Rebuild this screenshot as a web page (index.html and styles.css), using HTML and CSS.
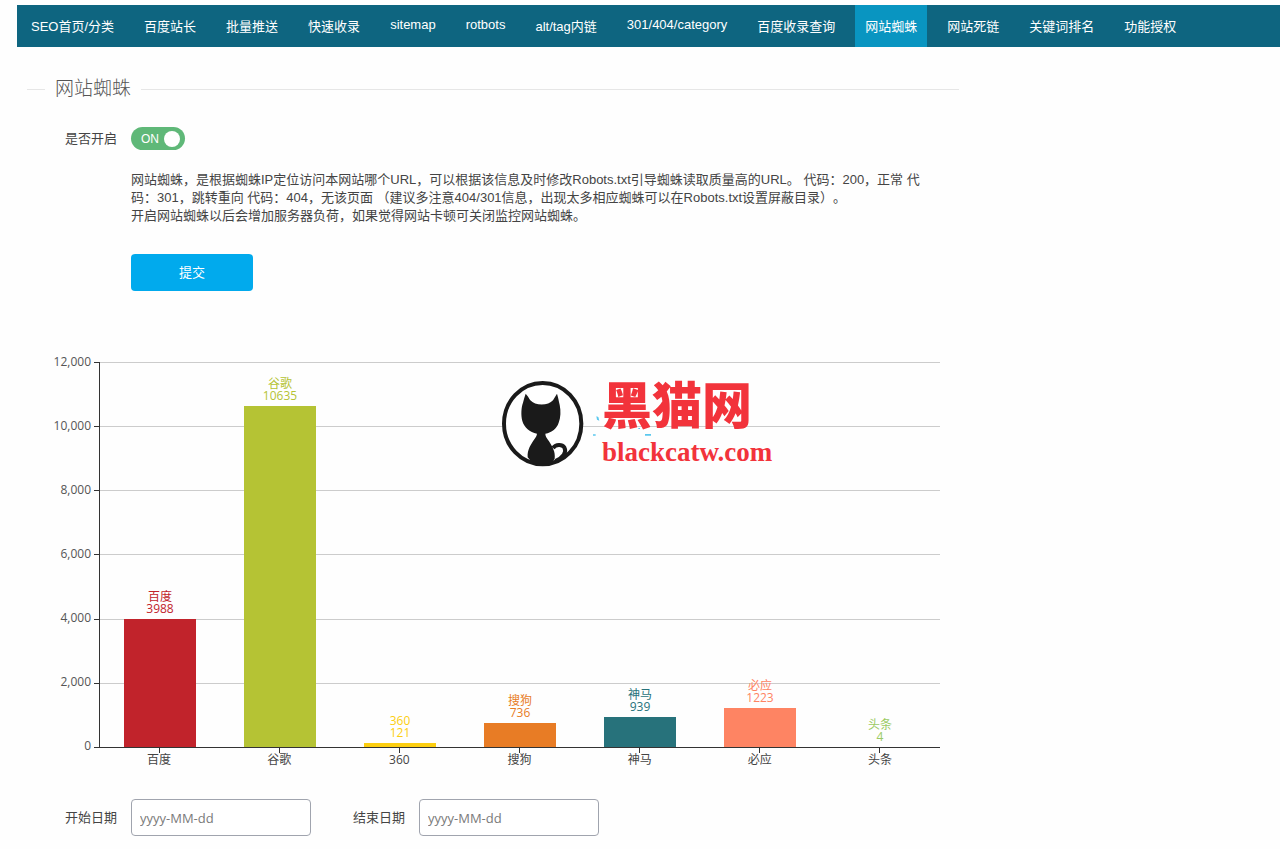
FILE: index.html
```html
<!DOCTYPE html>
<html lang="zh-CN">
<head>
<meta charset="utf-8">
<meta name="viewport" content="width=device-width, initial-scale=1">
<title>网站蜘蛛</title>
<link rel="stylesheet" href="styles.css">
</head>
<body>
<nav class="topnav">
  <a href="#">SEO首页/分类</a>
  <a href="#">百度站长</a>
  <a href="#">批量推送</a>
  <a href="#">快速收录</a>
  <a href="#" class="latin">sitemap</a>
  <a href="#" class="latin">rotbots</a>
  <a href="#">alt/tag内链</a>
  <a href="#" class="latin">301/404/category</a>
  <a href="#">百度收录查询</a>
  <a href="#" class="active" aria-current="page">网站蜘蛛</a>
  <a href="#">网站死链</a>
  <a href="#">关键词排名</a>
  <a href="#">功能授权</a>
</nav>

<main class="page">
  <h1 class="section-title">网站蜘蛛</h1>

  <form class="settings">
    <div class="row">
      <label class="row-label" for="enable">是否开启</label>
      <div class="switch">
        <input type="checkbox" id="enable" checked>
        <span class="switch-text">ON</span>
      </div>
    </div>
    <div class="row-body">
      <p class="help">网站蜘蛛，是根据蜘蛛IP定位访问本网站哪个URL，可以根据该信息及时修改Robots.txt引导蜘蛛读取质量高的URL。 代码：200，正常 代码：301，跳转重向 代码：404，无该页面 （建议多注意404/301信息，出现太多相应蜘蛛可以在Robots.txt设置屏蔽目录）。<br>开启网站蜘蛛以后会增加服务器负荷，如果觉得网站卡顿可关闭监控网站蜘蛛。</p>
      <button type="button" class="submit">提交</button>
    </div>
  </form>

  <section class="chart">
    <ul class="y-axis">
      <li><span>12,000</span></li>
      <li><span>10,000</span></li>
      <li><span>8,000</span></li>
      <li><span>6,000</span></li>
      <li><span>4,000</span></li>
      <li><span>2,000</span></li>
      <li><span>0</span></li>
    </ul>
    <div class="plot">
      <div class="grid-lines"><i></i><i></i><i></i><i></i><i></i><i></i><i></i></div>
      <div class="bars">
        <div class="col baidu"><span class="value">百度<br>3988</span><div class="bar" style="height:33.23%"></div></div>
        <div class="col google"><span class="value">谷歌<br>10635</span><div class="bar" style="height:88.63%"></div></div>
        <div class="col so360"><span class="value">360<br>121</span><div class="bar" style="height:1.01%"></div></div>
        <div class="col sogou"><span class="value">搜狗<br>736</span><div class="bar" style="height:6.13%"></div></div>
        <div class="col shenma"><span class="value">神马<br>939</span><div class="bar" style="height:7.83%"></div></div>
        <div class="col bing"><span class="value">必应<br>1223</span><div class="bar" style="height:10.19%"></div></div>
        <div class="col toutiao"><span class="value">头条<br>4</span><div class="bar" style="height:0%"></div></div>
      </div>
    </div>
    <ul class="x-axis">
      <li>百度</li><li>谷歌</li><li>360</li><li>搜狗</li><li>神马</li><li>必应</li><li>头条</li>
    </ul>
    <svg class="brand" width="300" height="130" viewBox="0 -20 300 130" role="img" aria-label="黑猫网 blackcatw.com">
      <g transform="scale(.33333)">
        <ellipse cx="158" cy="161" rx="116" ry="122" fill="#fff" stroke="#1a1a1a" stroke-width="12"/>
        <path fill="#1a1a1a" d="M107 71C112 76 117 84 121 91C135 108 175 108 189 91C193 84 197 77 201 71C205 83 206 93 209 104C213 122 212 143 206 158C200 176 186 187 166 191C166 199 171 205 177 214C187 230 197 246 194 266L184 281H130L113 262C111 239 124 222 133 208C138 201 140 197 141 191C119 187 103 173 97 153C92 135 94 111 99 98C101 89 104 80 107 71Z"/>
        <path fill="none" stroke="#1a1a1a" stroke-width="12" d="M189 234C198 222 216 222 223 232C231 247 219 264 196 273"/>
        <path fill="#5bc8ee" d="M319 139l6 2 3 11-7-3zM309 193h8v4h-8zM465 192h18v5h-18zM384 38l4 3-2 6zM445 174h5v3h-5z"/>
      </g>
      <text class="brand-name" x="112" y="54">黑猫网</text>
      <text class="brand-domain" x="112" y="91">blackcatw.com</text>
    </svg>
  </section>

  <form class="dates">
    <div class="row">
      <label class="row-label" for="start">开始日期</label>
      <input class="date" id="start" type="text" placeholder="yyyy-MM-dd">
    </div>
    <div class="row">
      <label class="row-label" for="end">结束日期</label>
      <input class="date" id="end" type="text" placeholder="yyyy-MM-dd">
    </div>
  </form>
</main>
</body>
</html>
```

FILE: styles.css
```css
* {
  box-sizing: border-box;
}

body {
  margin: 0;
  padding: 5px 0 12px 17px;
  background: #fefefe;
  color: #444;
  font: 13px/18px "Liberation Sans", "Noto Sans CJK SC", sans-serif;
  text-spacing-trim: space-all;
}

ul {
  margin: 0;
  padding: 0;
  list-style: none;
}

.topnav {
  display: flex;
  gap: 10px;
  min-height: 42px;
  padding: 0 4px;
  background: #0e6580;
  line-height: normal;
  white-space: nowrap;
}

.topnav a {
  display: flex;
  align-items: center;
  padding: 0 10px 1px;
  color: #fff;
  text-decoration: none;
}

.topnav .latin {
  padding-bottom: 4px;
}

.topnav .active {
  background: #0995c1;
}

.page {
  max-width: 942px;
  padding-left: 10px;
}

.section-title {
  display: flex;
  align-items: center;
  gap: 10px;
  margin: 29px 0 25px;
  color: #555;
  font-size: 19px;
  font-weight: 300;
  line-height: 26px;
}

.section-title::before,
.section-title::after {
  content: "";
  width: 18px;
  height: 1px;
  background: #e6e6e6;
}

.section-title::after {
  flex: 1;
}

.row {
  display: flex;
  align-items: center;
}

.row-label {
  width: 90px;
  margin-right: 14px;
  text-align: right;
}

.switch {
  display: grid;
  align-items: center;
}

.switch input,
.switch-text {
  grid-area: 1 / 1;
}

.switch input {
  display: flex;
  align-items: center;
  justify-content: flex-end;
  appearance: none;
  width: 54px;
  height: 23px;
  margin: 0;
  padding: 0 5px;
  border-radius: 12px;
  background: #5fb878;
}

.switch input::after {
  content: "";
  width: 16px;
  height: 16px;
  border-radius: 50%;
  background: #fff;
}

.switch-text {
  padding-left: 10px;
  color: #fff;
  font-size: 12px;
  pointer-events: none;
}

.row-body {
  padding: 21px 20px 0 104px;
}

.help {
  margin: 0 0 29px;
}

.submit {
  width: 122px;
  height: 37px;
  border: 0;
  border-radius: 4px;
  background: #01aaed;
  color: #fff;
  font: inherit;
}

.chart {
  position: relative;
  display: grid;
  grid-template-columns: 72px 1fr;
  margin: 71px 19px 0 0;
  font: 12px/12px "Open Sans", "Noto Sans CJK SC", sans-serif;
}

.y-axis {
  display: flex;
  flex-direction: column;
  justify-content: space-between;
  height: 386px;
  color: #555;
}

.y-axis li {
  display: flex;
  align-items: center;
  justify-content: flex-end;
  gap: 3px;
  height: 1px;
}

.y-axis span {
  padding-bottom: 2px;
}

.y-axis li::after {
  content: "";
  width: 5px;
  height: 1px;
  background: #333;
}

.plot {
  display: grid;
  border-left: 1px solid #333;
}

.grid-lines,
.bars {
  grid-area: 1 / 1;
}

.grid-lines {
  display: flex;
  flex-direction: column;
  justify-content: space-between;
}

.grid-lines i {
  height: 1px;
  background: #ccc;
}

.bars {
  display: flex;
  border-bottom: 1px solid #333;
}

.col {
  display: flex;
  flex: 1;
  flex-direction: column;
  align-items: center;
  justify-content: flex-end;
}

.value {
  margin-bottom: 4px;
  text-align: center;
}

.bar {
  flex-shrink: 0;
  width: 60%;
  background: currentColor;
}

.baidu { color: #c1232b; }
.google { color: #b5c334; }
.so360 { color: #fcce10; }
.sogou { color: #e87c25; }
.shenma { color: #27727b; }
.bing { color: #fe8463; }
.toutiao { color: #9bca63; }

.x-axis {
  display: flex;
  grid-column: 2;
}

.x-axis li {
  display: flex;
  flex: 1;
  flex-direction: column;
  align-items: center;
  gap: 1px;
}

.x-axis li::before {
  content: "";
  width: 1px;
  height: 5px;
  background: #333;
}

.brand {
  position: absolute;
  top: -12px;
  left: 463px;
}

.brand-name,
.brand-domain {
  fill: #f2333b;
  font-weight: 900;
}

.brand-name {
  font-family: "Noto Sans CJK SC", sans-serif;
  font-size: 50px;
}

.brand-domain {
  font-family: "Liberation Serif", serif;
  font-size: 27px;
}

.dates {
  display: flex;
  flex-wrap: wrap;
  gap: 10px 4px;
  margin-top: 33px;
}

.date {
  width: 180px;
  height: 37px;
  padding: 0 8px;
  border: 1px solid #a0a4ae;
  border-radius: 4px;
  background: #fff;
  color: #444;
  font: 13px "Open Sans", "Noto Sans CJK SC", sans-serif;
}

.date::placeholder {
  color: #7a7a7a;
}
```
